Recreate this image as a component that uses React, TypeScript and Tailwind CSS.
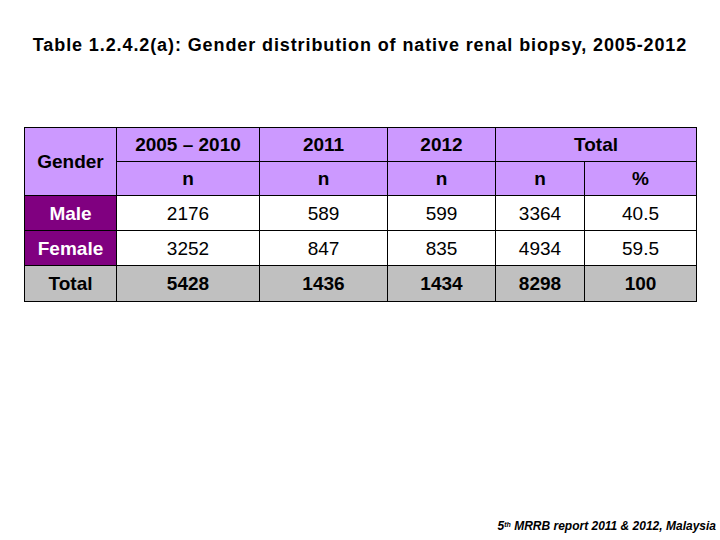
const rows = [
  { label: 'Male', values: ['2176', '589', '599', '3364', '40.5'] },
  { label: 'Female', values: ['3252', '847', '835', '4934', '59.5'] },
];

const totals = ['5428', '1436', '1434', '8298', '100'];

export default function App() {
  const cell = 'border border-black text-center p-0';

  return (
    <div className="w-[720px] h-[540px] bg-white flex flex-col font-['Liberation_Sans',Arial,sans-serif] text-black">
      <h1 className="mt-[34px] text-center text-[18px] font-bold leading-[22px] tracking-[0.9px]">
        Table 1.2.4.2(a): Gender distribution of native renal biopsy, 2005-2012
      </h1>

      <table className="mt-[71px] ml-[24px] w-[672px] border-collapse table-fixed text-[19px] leading-none">
        <colgroup>
          <col className="w-[92px]" />
          <col className="w-[143px]" />
          <col className="w-[128px]" />
          <col className="w-[108px]" />
          <col className="w-[89px]" />
          <col className="w-[112px]" />
        </colgroup>
        <thead className="bg-[#cc99ff] font-bold">
          <tr className="h-[34px]">
            <th rowSpan={2} className={cell}>Gender</th>
            <th className={cell}>2005 – 2010</th>
            <th className={cell}>2011</th>
            <th className={cell}>2012</th>
            <th colSpan={2} className={cell}>Total</th>
          </tr>
          <tr className="h-[34px]">
            <th className={cell}>n</th>
            <th className={cell}>n</th>
            <th className={cell}>n</th>
            <th className={cell}>n</th>
            <th className={cell}>%</th>
          </tr>
        </thead>
        <tbody>
          {rows.map((r) => (
            <tr key={r.label} className="h-[35px]">
              <td className={`${cell} bg-[#800080] text-white font-bold`}>{r.label}</td>
              {r.values.map((v, i) => (
                <td key={i} className={cell}>{v}</td>
              ))}
            </tr>
          ))}
          <tr className="h-[36px] bg-[#c0c0c0] font-bold">
            <td className={cell}>Total</td>
            {totals.map((v, i) => (
              <td key={i} className={cell}>{v}</td>
            ))}
          </tr>
        </tbody>
      </table>

      <div className="mt-auto mb-[8px] pr-[4px] text-right text-[12px] font-bold italic leading-none">
        5<sup className="text-[7px]">th</sup> MRRB report 2011 &amp; 2012, Malaysia
      </div>
    </div>
  );
}
